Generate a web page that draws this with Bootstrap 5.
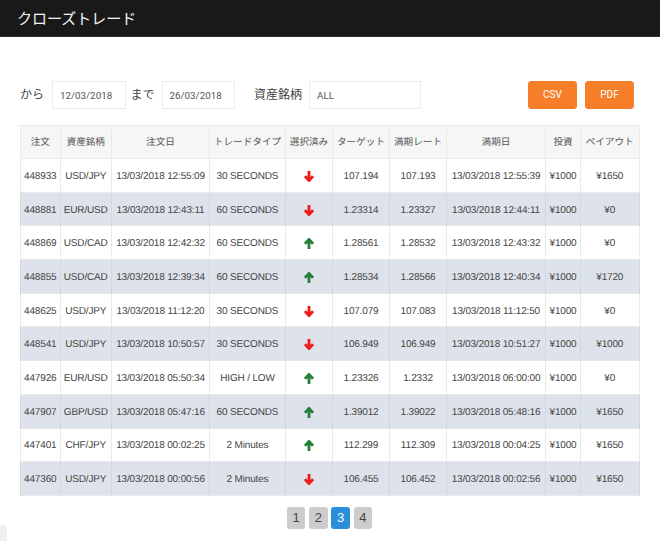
<!DOCTYPE html>
<html lang="ja">
<head>
<meta charset="utf-8">
<title>クローズトレード</title>
<link rel="stylesheet" href="https://cdn.jsdelivr.net/npm/bootstrap@5.3.0/dist/css/bootstrap.min.css">
<style>
html,body{height:551px;overflow:hidden}
body{font-family:"Liberation Sans","Noto Sans CJK JP",sans-serif;color:#444;background:#fff;font-size:10px}
.topbar{background:#191919;height:37px;padding:0 17px;border-bottom:1px solid #333}
.topbar .navbar-brand{color:#f4f4f4;font-size:15px;padding:0;margin:0;line-height:33px}
.filters{padding:44px 26px 0 20px;height:88px}
.flabel{font-size:12px;color:#444;line-height:29px}
.fbox{height:28px;border:1px solid #ececec;border-radius:0;font-size:9.8px;color:#555;padding:0 7px;line-height:26px;box-shadow:none;font-family:Roboto,sans-serif}
.fdate{width:73.5px}
.fasset{width:112px}
.gap-b{margin-left:5px;margin-right:7px}
.gap-c{margin-left:19px;margin-right:7px}
.btn-orange{background:#f77e28;border:1px solid #f77e28;color:#fff;font-size:10px;width:49px;height:28px;padding:0;border-radius:3px;line-height:26px;font-family:Roboto,sans-serif}
.tradewrap{padding:0 21px 0 20px}
.trades{table-layout:fixed;width:618.5px;margin:0;border-color:#e9e9e9;font-size:10px;letter-spacing:-.16px;text-rendering:geometricPrecision;--bs-table-color:#444;--bs-table-bg:#fff}
.trades th,.trades td{padding:2px 0 0;text-align:center;vertical-align:middle;font-weight:400;white-space:nowrap;overflow:hidden;height:33.7px}
.trades thead th{background:#f6f6f6;color:#555;height:33px;font-size:9.6px;letter-spacing:0}
.trades tbody tr:nth-of-type(even)>*{background:#dee3eb;border-color:#d3d8e0}
.c1{width:39.5px}.c2{width:51.5px}.c3{width:98px}.c4{width:76px}.c5{width:47px}.c6{width:57px}.c7{width:57px}.c8{width:99px}.c9{width:35px}.c10{width:58.5px}
.arrow{display:block;margin:0 auto;width:10px;height:11px;fill:none;stroke-width:2.8}
.arrow-down{stroke:#ee1c1c}
.arrow-up{stroke:#24803a}
.pager{margin:11px 0 0;gap:3.8px}
.pager .page-link{width:18.5px;height:22px;padding:0;margin:0!important;line-height:22px;text-align:center;background:#ccc;border:0;border-radius:3px!important;color:#444;font-size:13px}
.pager .page-item.active .page-link{background:#2a8fd8;color:#fff}
.cornerbit{position:absolute;left:0;top:525px;width:7px;height:16px;background:#f1f1f1;border-top-right-radius:4px}
</style>
</head>
<body>
<nav class="navbar topbar"><span class="navbar-brand">クローズトレード</span></nav>
<form class="filters d-flex align-items-start">
  <span class="flabel">から</span>
  <input class="form-control fbox fdate ms-2" value="12/03/2018">
  <span class="flabel gap-b">まで</span>
  <input class="form-control fbox fdate" value="26/03/2018">
  <span class="flabel gap-c">資産銘柄</span>
  <input class="form-control fbox fasset" value="ALL">
  <div class="d-flex gap-2 ms-auto">
    <button type="button" class="btn btn-orange">CSV</button>
    <button type="button" class="btn btn-orange">PDF</button>
  </div>
</form>
<div class="tradewrap">
<table class="table table-bordered trades">
<colgroup><col class="c1"><col class="c2"><col class="c3"><col class="c4"><col class="c5"><col class="c6"><col class="c7"><col class="c8"><col class="c9"><col class="c10"></colgroup>
<thead><tr><th>注文</th><th>資産銘柄</th><th>注文日</th><th>トレードタイプ</th><th>選択済み</th><th>ターゲット</th><th>満期レート</th><th>満期日</th><th>投資</th><th>ペイアウト</th></tr></thead>
<tbody>
<tr><td>448933</td><td>USD/JPY</td><td>13/03/2018 12:55:09</td><td>30 SECONDS</td><td><svg class="arrow arrow-down" viewBox="0 0 10 11"><path d="M5 0v9.5M1 5.2l4 4.4 4-4.4"/></svg></td><td>107.194</td><td>107.193</td><td>13/03/2018 12:55:39</td><td>¥1000</td><td>¥1650</td></tr>
<tr><td>448881</td><td>EUR/USD</td><td>13/03/2018 12:43:11</td><td>60 SECONDS</td><td><svg class="arrow arrow-down" viewBox="0 0 10 11"><path d="M5 0v9.5M1 5.2l4 4.4 4-4.4"/></svg></td><td>1.23314</td><td>1.23327</td><td>13/03/2018 12:44:11</td><td>¥1000</td><td>¥0</td></tr>
<tr><td>448869</td><td>USD/CAD</td><td>13/03/2018 12:42:32</td><td>60 SECONDS</td><td><svg class="arrow arrow-up" viewBox="0 0 10 11"><path d="M5 11V1.5M1 5.8l4-4.4 4 4.4"/></svg></td><td>1.28561</td><td>1.28532</td><td>13/03/2018 12:43:32</td><td>¥1000</td><td>¥0</td></tr>
<tr><td>448855</td><td>USD/CAD</td><td>13/03/2018 12:39:34</td><td>60 SECONDS</td><td><svg class="arrow arrow-up" viewBox="0 0 10 11"><path d="M5 11V1.5M1 5.8l4-4.4 4 4.4"/></svg></td><td>1.28534</td><td>1.28566</td><td>13/03/2018 12:40:34</td><td>¥1000</td><td>¥1720</td></tr>
<tr><td>448625</td><td>USD/JPY</td><td>13/03/2018 11:12:20</td><td>30 SECONDS</td><td><svg class="arrow arrow-down" viewBox="0 0 10 11"><path d="M5 0v9.5M1 5.2l4 4.4 4-4.4"/></svg></td><td>107.079</td><td>107.083</td><td>13/03/2018 11:12:50</td><td>¥1000</td><td>¥0</td></tr>
<tr><td>448541</td><td>USD/JPY</td><td>13/03/2018 10:50:57</td><td>30 SECONDS</td><td><svg class="arrow arrow-down" viewBox="0 0 10 11"><path d="M5 0v9.5M1 5.2l4 4.4 4-4.4"/></svg></td><td>106.949</td><td>106.949</td><td>13/03/2018 10:51:27</td><td>¥1000</td><td>¥1000</td></tr>
<tr><td>447926</td><td>EUR/USD</td><td>13/03/2018 05:50:34</td><td>HIGH / LOW</td><td><svg class="arrow arrow-up" viewBox="0 0 10 11"><path d="M5 11V1.5M1 5.8l4-4.4 4 4.4"/></svg></td><td>1.23326</td><td>1.2332</td><td>13/03/2018 06:00:00</td><td>¥1000</td><td>¥0</td></tr>
<tr><td>447907</td><td>GBP/USD</td><td>13/03/2018 05:47:16</td><td>60 SECONDS</td><td><svg class="arrow arrow-up" viewBox="0 0 10 11"><path d="M5 11V1.5M1 5.8l4-4.4 4 4.4"/></svg></td><td>1.39012</td><td>1.39022</td><td>13/03/2018 05:48:16</td><td>¥1000</td><td>¥1650</td></tr>
<tr><td>447401</td><td>CHF/JPY</td><td>13/03/2018 00:02:25</td><td>2 Minutes</td><td><svg class="arrow arrow-up" viewBox="0 0 10 11"><path d="M5 11V1.5M1 5.8l4-4.4 4 4.4"/></svg></td><td>112.299</td><td>112.309</td><td>13/03/2018 00:04:25</td><td>¥1000</td><td>¥1650</td></tr>
<tr><td>447360</td><td>USD/JPY</td><td>13/03/2018 00:00:56</td><td>2 Minutes</td><td><svg class="arrow arrow-down" viewBox="0 0 10 11"><path d="M5 0v9.5M1 5.2l4 4.4 4-4.4"/></svg></td><td>106.455</td><td>106.452</td><td>13/03/2018 00:02:56</td><td>¥1000</td><td>¥1650</td></tr>
</tbody>
</table>
<ul class="pagination pager justify-content-center">
<li class="page-item"><a class="page-link" href="#">1</a></li>
<li class="page-item"><a class="page-link" href="#">2</a></li>
<li class="page-item active"><a class="page-link" href="#">3</a></li>
<li class="page-item"><a class="page-link" href="#">4</a></li>
</ul>
</div>
<div class="cornerbit"></div>
<script src="https://cdn.jsdelivr.net/npm/bootstrap@5.3.0/dist/js/bootstrap.bundle.min.js"></script>
</body>
</html>
